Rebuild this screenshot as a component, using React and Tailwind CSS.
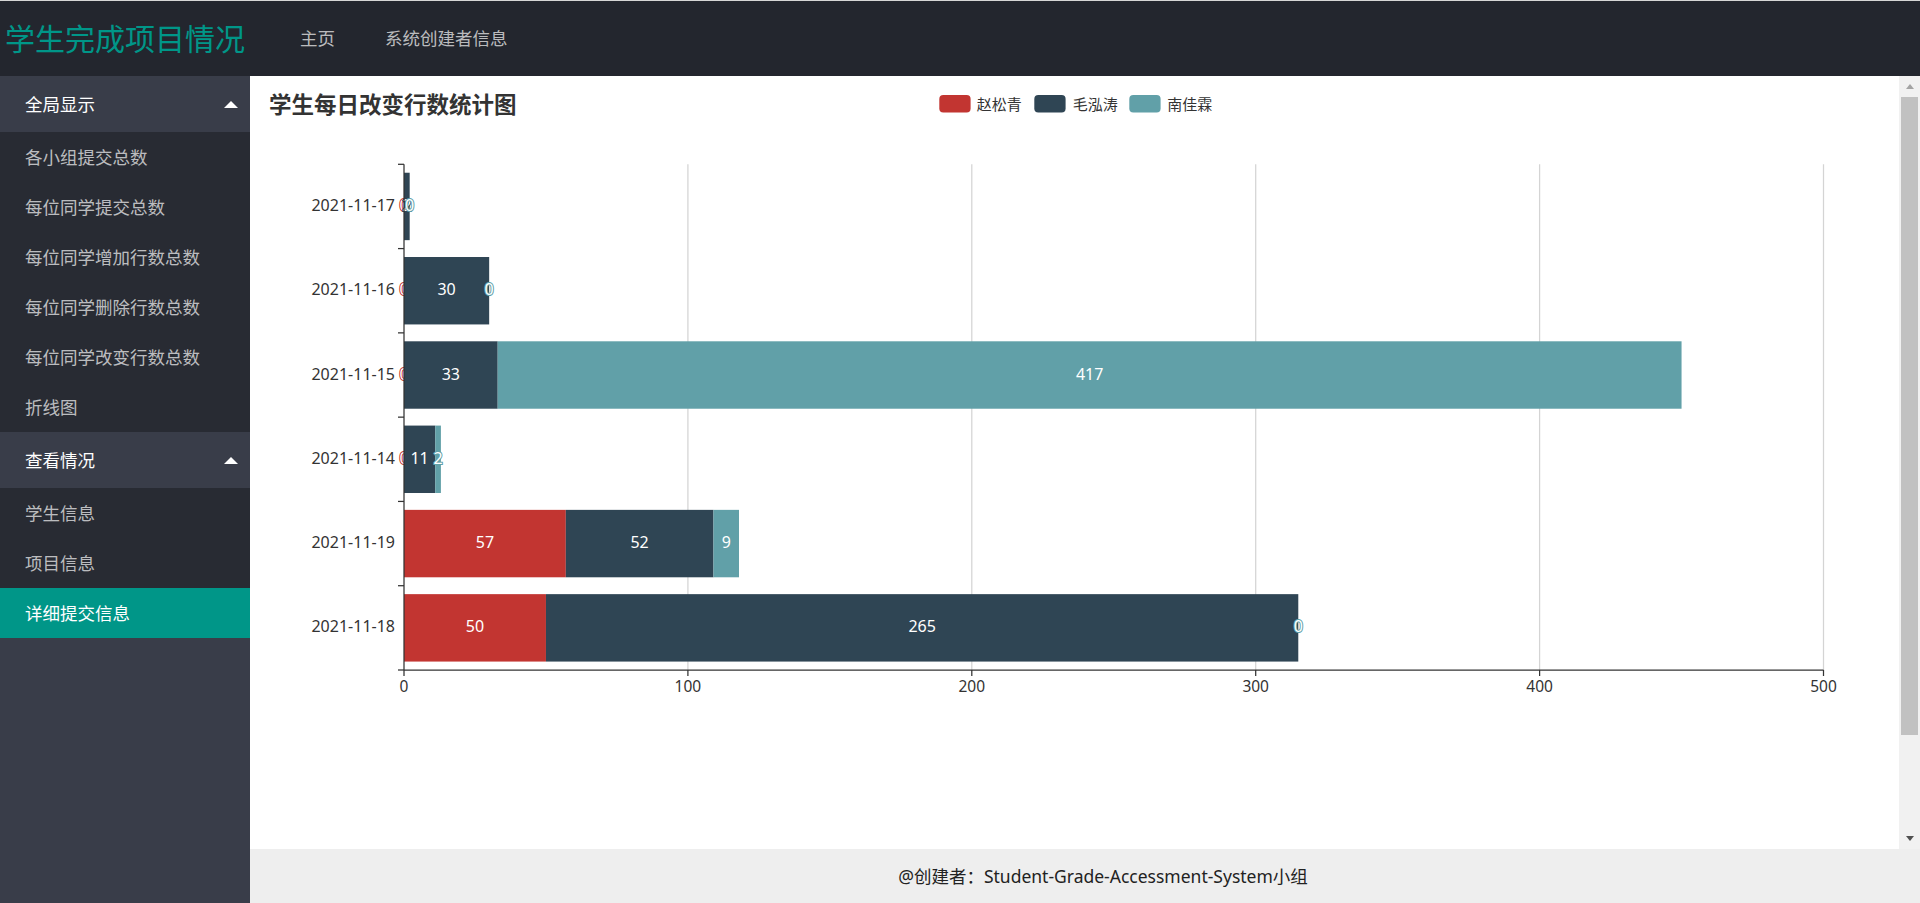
import React from "react";

const FONT = '"Noto Sans", "Noto Sans CJK SC", sans-serif';

const categories = ["2021-11-17", "2021-11-16", "2021-11-15", "2021-11-14", "2021-11-19", "2021-11-18"];

const series = [
  { name: "赵松青", color: "#c23531", values: [0, 0, 0, 0, 57, 50] },
  { name: "毛泓涛", color: "#2f4554", values: [2, 30, 33, 11, 52, 265] },
  { name: "南佳霖", color: "#61a0a8", values: [0, 0, 417, 2, 9, 0] },
];

// grid geometry, in px inside the chart box
const left = 154;
const top = 88.3;
const bottom = 594;
const unit = 2.839;
const band = (bottom - top) / categories.length;
const px = (v) => left + v * unit;

function BarChart() {
  const offsets = categories.map(() => 0);
  const layers = series.map((s) => {
    const segs = s.values.map((v, i) => {
      const start = offsets[i];
      offsets[i] += v;
      return { i, v, x: px(start), w: v * unit };
    });
    return { ...s, segs };
  });

  return (
    <svg width="1649" height="773" viewBox="0 0 1649 773" style={{ fontFamily: FONT }}>
      <text x="19" y="28.5" fontSize="22.5" fontWeight="bold" fill="#333" dominantBaseline="central">
        学生每日改变行数统计图
      </text>

      {/* legend */}
      {[
        { x: 689.3, tx: 726.7 },
        { x: 784.3, tx: 822.7 },
        { x: 879.3, tx: 917.3 },
      ].map((p, k) => (
        <g key={k}>
          <rect x={p.x} y="19" width="31.3" height="17.5" rx="4" fill={series[k].color} />
          <text x={p.tx} y="28" fontSize="15" fill="#333" dominantBaseline="central">
            {series[k].name}
          </text>
        </g>
      ))}

      {/* split lines */}
      {[100, 200, 300, 400, 500].map((v) => (
        <line key={v} x1={px(v)} x2={px(v)} y1={top} y2={bottom} stroke="#d4d4d4" strokeWidth="1.25" />
      ))}

      {/* bars and labels, series by series */}
      {layers.map((s) => (
        <g key={s.name}>
          {s.segs.map((g) =>
            g.w > 0 ? (
              <rect
                key={"r" + g.i}
                x={g.x}
                y={top + g.i * band + band * 0.1}
                width={g.w}
                height={band * 0.8}
                fill={s.color}
              />
            ) : null
          )}
          {s.segs.map((g) => (
            <text
              key={"t" + g.i}
              x={g.x + g.w / 2}
              y={top + g.i * band + band / 2 - 1.5}
              fontSize="16"
              fill="#fff"
              stroke={s.color}
              strokeWidth="2"
              paintOrder="stroke"
              textAnchor="middle"
              dominantBaseline="central"
            >
              {g.v}
            </text>
          ))}
        </g>
      ))}

      {/* y axis */}
      <line x1={left} x2={left} y1={top} y2={bottom} stroke="#333" strokeWidth="1.25" />
      {categories.map((c, i) => (
        <text
          key={c}
          x="145"
          y={top + i * band + band / 2 - 1.5}
          fontSize="16"
          fill="#333"
          textAnchor="end"
          dominantBaseline="central"
        >
          {c}
        </text>
      ))}
      {Array.from({ length: categories.length + 1 }).map((_, i) => (
        <line key={i} x1={left - 6} x2={left} y1={top + i * band} y2={top + i * band} stroke="#333" strokeWidth="1.25" />
      ))}

      {/* x axis */}
      <line x1={left} x2={px(500)} y1={bottom} y2={bottom} stroke="#333" strokeWidth="1.25" />
      {[0, 100, 200, 300, 400, 500].map((v) => (
        <g key={v}>
          <line x1={px(v)} x2={px(v)} y1={bottom} y2={bottom + 6} stroke="#333" strokeWidth="1.25" />
          <text x={px(v)} y="610" fontSize="15.5" fill="#333" textAnchor="middle" dominantBaseline="central">
            {v}
          </text>
        </g>
      ))}
    </svg>
  );
}

function GroupHeader({ label }) {
  return (
    <div className="h-[56px] flex items-center justify-between pl-[25px] pr-[12px] text-white">
      <span>{label}</span>
      <span className="w-0 h-0 border-x-[7.5px] border-x-transparent border-b-[7.5px] border-b-white" />
    </div>
  );
}

function NavItem({ label, active }) {
  return (
    <div
      className={`h-[50px] flex items-center pl-[25px] ${
        active ? "bg-[#009688] text-white" : "text-white/70"
      }`}
    >
      {label}
    </div>
  );
}

export default function App() {
  return (
    <div
      className="h-[903px] flex flex-col overflow-hidden text-[17.5px]"
      style={{ fontFamily: FONT }}
    >
      <header className="h-[76px] shrink-0 border-t border-[#d6d6d6] bg-[#23262e] flex items-center">
        <div className="w-[250px] text-center text-[30px] text-[#009688]">学生完成项目情况</div>
        <nav className="flex pl-[25px] text-white/70">
          <span className="px-[25px]">主页</span>
          <span className="px-[25px]">系统创建者信息</span>
        </nav>
      </header>

      <div className="flex flex-1 min-h-0">
        <aside className="w-[250px] shrink-0 bg-[#393d49]">
          <GroupHeader label="全局显示" />
          <div className="bg-[#282b33]">
            <NavItem label="各小组提交总数" />
            <NavItem label="每位同学提交总数" />
            <NavItem label="每位同学增加行数总数" />
            <NavItem label="每位同学删除行数总数" />
            <NavItem label="每位同学改变行数总数" />
            <NavItem label="折线图" />
          </div>
          <GroupHeader label="查看情况" />
          <div className="bg-[#282b33]">
            <NavItem label="学生信息" />
            <NavItem label="项目信息" />
            <NavItem label="详细提交信息" active />
          </div>
        </aside>

        <div className="flex-1 flex flex-col min-w-0">
          <div className="h-[773px] flex shrink-0">
            <main className="flex-1 bg-white overflow-hidden">
              <BarChart />
            </main>
            <div className="w-[21px] bg-[#f1f1f1] flex flex-col">
              <div className="h-[21px] flex items-center justify-center">
                <span className="w-0 h-0 border-x-[4.5px] border-x-transparent border-b-[5px] border-b-[#a3a3a3]" />
              </div>
              <div className="mx-[2px] h-[638px] bg-[#c1c1c1]" />
              <div className="flex-1" />
              <div className="h-[21px] flex items-center justify-center">
                <span className="w-0 h-0 border-x-[4.5px] border-x-transparent border-t-[5px] border-t-[#505050]" />
              </div>
            </div>
          </div>
          <footer className="flex-1 bg-[#eeeeee] flex items-center justify-center pl-[36px] text-[#222]">
            @创建者：Student-Grade-Accessment-System小组
          </footer>
        </div>
      </div>
    </div>
  );
}
